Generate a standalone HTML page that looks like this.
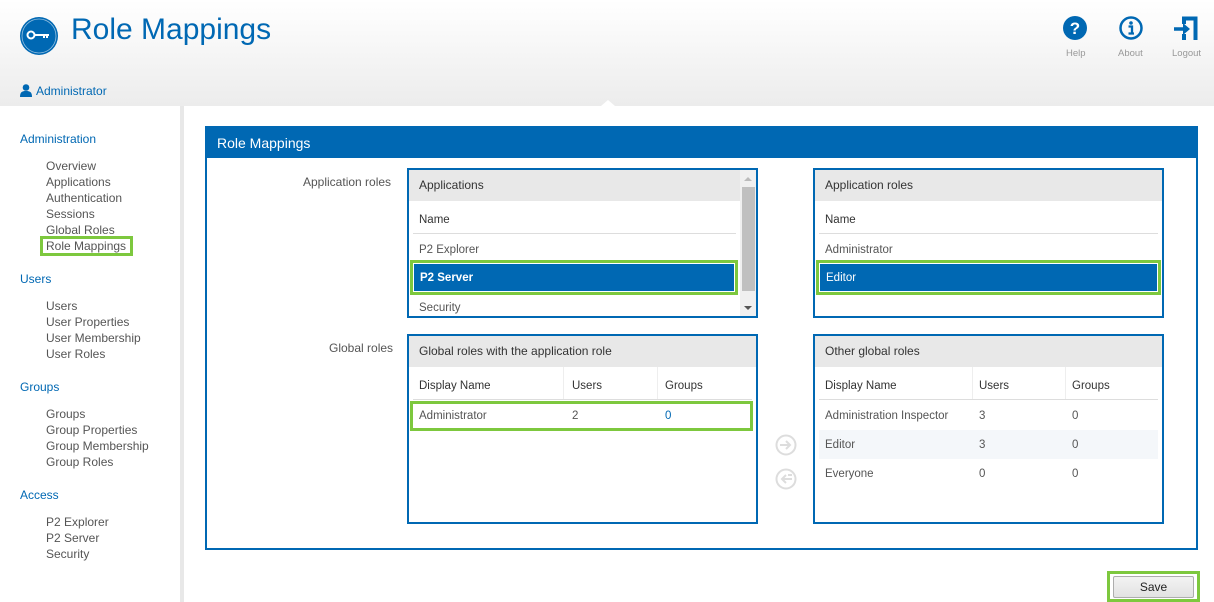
<!DOCTYPE html>
<html><head><meta charset="utf-8"><style>
*{margin:0;padding:0;box-sizing:border-box}
body{width:1214px;height:602px;overflow:hidden;font-family:"Liberation Sans",sans-serif;font-size:11.5px;color:#555;background:#fff;position:relative}
.a{position:absolute;white-space:nowrap}
.hdr{position:absolute;left:0;top:0;width:1214px;height:106px;background:linear-gradient(#fff,#ececec)}
.blue{color:#0068b3}
.box{position:absolute;border:2px solid #0068b3;background:#fff;overflow:hidden}
.bh{position:absolute;left:0;top:0;right:0;height:31px;background:#e8e8e8;color:#333;font-size:12px;padding:8px 0 0 10px}
.sel{position:absolute;border:3px solid #7dc83e;}
.sel div{position:absolute;left:0;top:0;right:0;bottom:0;background:#0068b3;border:1px solid #fff;color:#fff;padding:8px 0 0 6px;font-size:11.5px}
.green{position:absolute;border:3px solid #7dc83e}
</style></head><body>
<div class="hdr"></div>
<svg class="a" style="left:19px;top:16px" width="40" height="40" viewBox="0 0 40 40"><circle cx="20" cy="20" r="19" fill="#0068b3"/><circle cx="20" cy="20" r="17" fill="none" stroke="#fff" stroke-width="0.8" opacity=".6"/><circle cx="12" cy="19" r="3.5" fill="none" stroke="#fff" stroke-width="2"/><path d="M15.5 19H30M25 19v3M28 19v3" stroke="#fff" stroke-width="2"/></svg>
<div class="a blue" style="left:71px;top:13px;font-size:30px">Role Mappings</div>
<svg class="a" style="left:20px;top:84px" width="12" height="13" viewBox="0 0 12 13"><circle cx="6" cy="3.5" r="3.3" fill="#0068b3"/><path d="M0 13c0-5 2-6 6-6s6 1 6 6z" fill="#0068b3"/></svg>
<div class="a blue" style="left:36px;top:84px;font-size:12px">Administrator</div>
<svg class="a" style="left:1063px;top:16px" width="24" height="24" viewBox="0 0 24 24"><circle cx="12" cy="12" r="12" fill="#0068b3"/><text x="12" y="18" text-anchor="middle" fill="#fff" font-family="Liberation Sans" font-weight="bold" font-size="17">?</text></svg>
<svg class="a" style="left:1119px;top:16px" width="24" height="24" viewBox="0 0 24 24"><circle cx="12" cy="12" r="10.5" fill="none" stroke="#0068b3" stroke-width="2.5"/><circle cx="12" cy="7" r="1.8" fill="#0068b3"/><path d="M9.5 10.5h3.5v7M9.5 17.5h5.5" stroke="#0068b3" stroke-width="2.3" fill="none"/></svg>
<svg class="a" style="left:1173px;top:16px" width="26" height="25" viewBox="0 0 26 25"><path d="M11 8V2.5h11.5V24" stroke="#0068b3" stroke-width="4" fill="none"/><path d="M1 13h9" stroke="#0068b3" stroke-width="3.5"/><path d="M10 7l7 6-7 6z" fill="#0068b3"/><path d="M11 18v6" stroke="#0068b3" stroke-width="4"/></svg>
<div class="a" style="left:1066px;top:48px;font-size:9.5px;color:#999">Help</div>
<div class="a" style="left:1118px;top:48px;font-size:9.5px;color:#999">About</div>
<div class="a" style="left:1172px;top:48px;font-size:9.5px;color:#999">Logout</div>
<div class="a" style="left:601px;top:100px;width:0;height:0;border-left:7px solid transparent;border-right:7px solid transparent;border-bottom:6px solid #fff"></div>
<div class="a" style="left:180px;top:106px;width:4px;height:496px;background:#e8e8e8"></div>
<div class="a blue" style="left:20px;top:132px;font-size:12px">Administration</div>
<div class="a" style="left:46px;top:158px;line-height:16px;font-size:12px">Overview<br>Applications<br>Authentication<br>Sessions<br>Global Roles<br>Role Mappings</div>
<div class="green" style="left:40px;top:236px;width:93px;height:20px"></div>
<div class="a blue" style="left:20px;top:272px;font-size:12px">Users</div>
<div class="a" style="left:46px;top:298px;line-height:16px;font-size:12px">Users<br>User Properties<br>User Membership<br>User Roles</div>
<div class="a blue" style="left:20px;top:380px;font-size:12px">Groups</div>
<div class="a" style="left:46px;top:406px;line-height:16px;font-size:12px">Groups<br>Group Properties<br>Group Membership<br>Group Roles</div>
<div class="a blue" style="left:20px;top:488px;font-size:12px">Access</div>
<div class="a" style="left:46px;top:514px;line-height:16px;font-size:12px">P2 Explorer<br>P2 Server<br>Security</div>

<div class="a" style="left:205px;top:126px;width:993px;height:424px;border:2px solid #0068b3"></div>
<div class="a" style="left:205px;top:126px;width:993px;height:32px;background:#0068b3;color:#fff;font-size:14px;padding:9px 0 0 12px">Role Mappings</div>
<div class="a" style="left:303px;top:175px;font-size:12px">Application roles</div>
<div class="a" style="left:329px;top:341px;font-size:12px">Global roles</div>

<div class="box" style="left:407px;top:168px;width:351px;height:150px">
<div class="bh">Applications</div>
<div class="a" style="left:10px;top:44px;color:#333">Name</div>
<div class="a" style="left:4px;top:63px;width:323px;height:1px;background:#ddd"></div>
<div class="a" style="left:10px;top:74px">P2 Explorer</div>
<div class="a" style="left:10px;top:132px">Security</div>
<div class="a" style="left:331px;top:0;width:16px;height:146px;background:#f0f0f0"></div>
<div class="a" style="left:333px;top:17px;width:13px;height:104px;background:#c0c0c0"></div>
<div class="a" style="left:335px;top:7px;border:4px solid transparent;border-bottom:4px solid #bbb;border-top:0"></div>
<div class="a" style="left:335px;top:136px;border:4px solid transparent;border-top:4px solid #555;border-bottom:0"></div>
</div>
<div class="sel" style="left:410px;top:260px;width:328px;height:35px"><div style="font-weight:bold">P2 Server</div></div>

<div class="box" style="left:813px;top:168px;width:351px;height:150px">
<div class="bh">Application roles</div>
<div class="a" style="left:10px;top:44px;color:#333">Name</div>
<div class="a" style="left:4px;top:63px;width:339px;height:1px;background:#ddd"></div>
<div class="a" style="left:10px;top:74px">Administrator</div>
</div>
<div class="sel" style="left:816px;top:260px;width:345px;height:35px"><div>Editor</div></div>

<div class="box" style="left:407px;top:334px;width:351px;height:190px">
<div class="bh">Global roles with the application role</div>
<div class="a" style="left:10px;top:44px;color:#333">Display Name</div>
<div class="a" style="left:163px;top:44px;color:#333">Users</div>
<div class="a" style="left:256px;top:44px;color:#333">Groups</div>
<div class="a" style="left:154px;top:31px;width:1px;height:32px;background:#eee"></div>
<div class="a" style="left:248px;top:31px;width:1px;height:32px;background:#eee"></div>
<div class="a" style="left:4px;top:63px;width:339px;height:1px;background:#ddd"></div>
<div class="a" style="left:10px;top:74px">Administrator</div>
<div class="a" style="left:163px;top:74px">2</div>
<div class="a blue" style="left:256px;top:74px">0</div>
</div>
<div class="green" style="left:410px;top:401px;width:343px;height:30px"></div>

<div class="box" style="left:813px;top:334px;width:351px;height:190px">
<div class="bh">Other global roles</div>
<div class="a" style="left:10px;top:44px;color:#333">Display Name</div>
<div class="a" style="left:164px;top:44px;color:#333">Users</div>
<div class="a" style="left:257px;top:44px;color:#333">Groups</div>
<div class="a" style="left:157px;top:31px;width:1px;height:32px;background:#eee"></div>
<div class="a" style="left:250px;top:31px;width:1px;height:32px;background:#eee"></div>
<div class="a" style="left:4px;top:63px;width:339px;height:1px;background:#ddd"></div>
<div class="a" style="left:4px;top:94px;width:339px;height:29px;background:#f4f7fa"></div>
<div class="a" style="left:10px;top:74px">Administration Inspector</div>
<div class="a" style="left:164px;top:74px">3</div>
<div class="a" style="left:257px;top:74px">0</div>
<div class="a" style="left:10px;top:103px">Editor</div>
<div class="a" style="left:164px;top:103px">3</div>
<div class="a" style="left:257px;top:103px">0</div>
<div class="a" style="left:10px;top:132px">Everyone</div>
<div class="a" style="left:164px;top:132px">0</div>
<div class="a" style="left:257px;top:132px">0</div>
</div>

<svg class="a" style="left:774px;top:434px" width="24" height="56" viewBox="0 0 24 56"><circle cx="12" cy="11" r="9.5" fill="none" stroke="#ddd" stroke-width="2"/><path d="M6 11h10M12 7l4 4-4 4" stroke="#ddd" stroke-width="2" fill="none"/><circle cx="12" cy="45" r="9.5" fill="none" stroke="#ddd" stroke-width="2"/><path d="M18 45H8M12 41l-4 4 4 4M14 41h4" stroke="#ddd" stroke-width="2" fill="none"/></svg>

<div class="green" style="left:1107px;top:571px;width:93px;height:31px"></div>
<div class="a" style="left:1113px;top:576px;width:81px;height:22px;border:1px solid #adadad;border-radius:2px;background:linear-gradient(#f3f3f3,#e2e2e2);color:#222;font-size:12px;text-align:center;line-height:20px">Save</div>
</body></html>
